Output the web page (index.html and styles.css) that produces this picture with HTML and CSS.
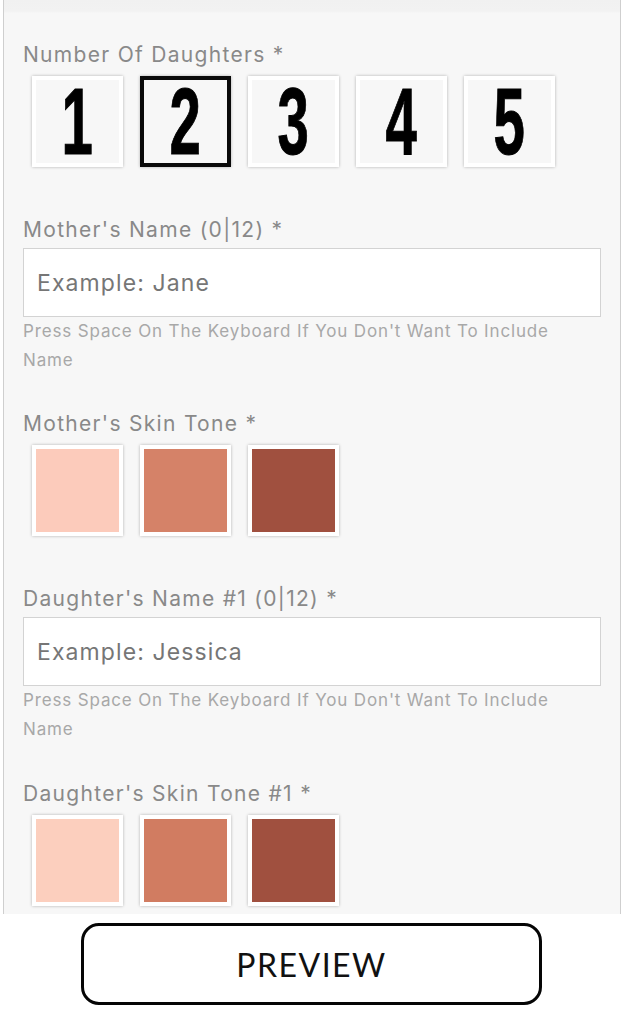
FILE: index.html
```html
<!DOCTYPE html>
<html lang="en">
<head>
<meta charset="utf-8">
<title>Personalize</title>
<link rel="stylesheet" href="styles.css">
</head>
<body>
<div class="panel">
  <div class="field field-first">
    <div class="label">Number Of Daughters *</div>
    <div class="choices">
      <div class="tile"><span class="digit">1</span></div>
      <div class="tile selected"><span class="digit">2</span></div>
      <div class="tile"><span class="digit">3</span></div>
      <div class="tile"><span class="digit">4</span></div>
      <div class="tile"><span class="digit">5</span></div>
    </div>
  </div>

  <div class="field field-after-tiles">
    <div class="label">Mother's Name (0|12) *</div>
    <input class="text-input" type="text" placeholder="Example: Jane">
    <div class="help">Press Space On The Keyboard If You Don't Want To Include Name</div>
  </div>

  <div class="field field-after-help">
    <div class="label">Mother's Skin Tone *</div>
    <div class="choices">
      <div class="tile"><span class="swatch tone-light"></span></div>
      <div class="tile"><span class="swatch tone-medium"></span></div>
      <div class="tile"><span class="swatch tone-dark"></span></div>
    </div>
  </div>

  <div class="field field-after-tiles">
    <div class="label">Daughter's Name #1 (0|12) *</div>
    <input class="text-input" type="text" placeholder="Example: Jessica">
    <div class="help">Press Space On The Keyboard If You Don't Want To Include Name</div>
  </div>

  <div class="field field-after-help field-last">
    <div class="label">Daughter's Skin Tone #1 *</div>
    <div class="choices">
      <div class="tile"><span class="swatch tone-light2"></span></div>
      <div class="tile"><span class="swatch tone-medium2"></span></div>
      <div class="tile"><span class="swatch tone-dark"></span></div>
    </div>
  </div>
</div>

<div class="actions">
  <button class="preview" type="button">PREVIEW</button>
</div>
</body>
</html>
```

FILE: styles.css
```css
html, body {
  margin: 0;
  padding: 0;
  background: #ffffff;
}

body {
  font-family: Inter, "Open Sans", "Liberation Sans", sans-serif;
}

.panel {
  box-sizing: border-box;
  width: 618px;
  height: 914px;
  margin-left: 3px;
  padding: 40px 19px 0 19px;
  border-left: 1px solid #cfcfcf;
  border-right: 1px solid #cfcfcf;
  background: linear-gradient(to bottom, #f1f1f1 0, #f2f2f2 11px, #f7f7f7 13px, #f7f7f7 100%);
  overflow: hidden;
}

.field-after-tiles {
  margin-top: 48px;
}

.field-after-help {
  margin-top: 34px;
}

.field-last {
  margin-top: 35px;
}

.label {
  font-size: 21px;
  line-height: 30px;
  letter-spacing: 1.3px;
  color: #898989;
  font-weight: 400;
}

.choices {
  display: flex;
  gap: 17px;
  margin-top: 6px;
  margin-left: 9px;
}

.tile {
  box-sizing: border-box;
  width: 91px;
  height: 91px;
  border: 4px solid #ffffff;
  background: #f7f7f7;
  box-shadow: 0 0 3px rgba(0, 0, 0, 0.28);
  display: flex;
  align-items: center;
  justify-content: center;
}

.tile.selected {
  border-color: #0a0a0a;
}

.digit {
  display: block;
  font-family: "Liberation Sans", Arial, sans-serif;
  font-weight: 700;
  font-size: 94px;
  line-height: 0.76;
  height: 72px;
  color: #000;
  -webkit-text-stroke: 1px #000;
  transform: scaleX(0.6);
}

.swatch {
  display: block;
  width: 100%;
  height: 100%;
}

.tone-light { background: #fccbbb; }
.tone-medium { background: #d58268; }
.tone-dark { background: #a0503f; }
.tone-light2 { background: #fccfbe; }
.tone-medium2 { background: #d17c61; }

.text-input {
  display: block;
  box-sizing: border-box;
  width: 100%;
  height: 69px;
  margin: 3px 0 0 0;
  padding: 0 13px;
  border: 1px solid #d3d3d3;
  border-radius: 0;
  background: #ffffff;
  font-family: inherit;
  font-size: 23px;
  letter-spacing: 1.1px;
  color: #555;
  outline: none;
}

.text-input::placeholder {
  color: #767676;
  opacity: 1;
}

.help {
  font-size: 17px;
  line-height: 29px;
  letter-spacing: 0.85px;
  color: #a8a8a8;
  max-width: 540px;
}

.actions {
  padding-top: 9px;
}

.preview {
  display: flex;
  align-items: center;
  justify-content: center;
  box-sizing: border-box;
  width: 461px;
  height: 82px;
  margin-left: 81px;
  border: 3px solid #050505;
  border-radius: 18px;
  background: #ffffff;
  font-family: Lato, "Open Sans", sans-serif;
  font-size: 32px;
  letter-spacing: 1.5px;
  color: #111;
  padding: 0;
  cursor: pointer;
}
```
